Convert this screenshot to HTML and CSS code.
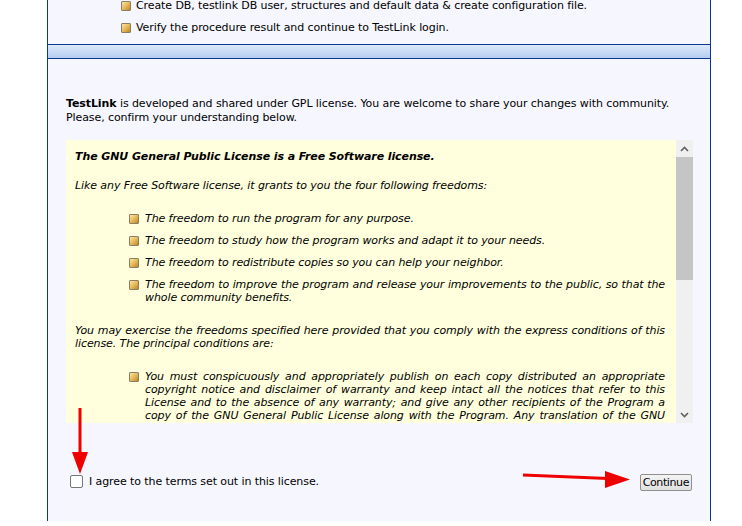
FILE: index.html
```html
<!DOCTYPE html>
<html>
<head>
<meta charset="utf-8">
<link rel="stylesheet" href="styles.css">
</head>
<body>
<div class="panel">
  <ul class="steps">
    <li><span class="bullet"></span>Create DB, testlink DB user, structures and default data &amp; create configuration file.</li>
    <li><span class="bullet"></span>Verify the procedure result and continue to TestLink login.</li>
  </ul>
  <div class="band"></div>
  <div class="content">
    <p class="intro"><b>TestLink</b> is developed and shared under GPL license. You are welcome to share your changes with community.<br>Please, confirm your understanding below.</p>
    <div class="license">
      <div class="license-text">
        <p class="title">The GNU General Public License is a Free Software license.</p>
        <p>Like any Free Software license, it grants to you the four following freedoms:</p>
        <ul class="items">
          <li><span class="bullet"></span><span>The freedom to run the program for any purpose.</span></li>
          <li><span class="bullet"></span><span>The freedom to study how the program works and adapt it to your needs.</span></li>
          <li><span class="bullet"></span><span>The freedom to redistribute copies so you can help your neighbor.</span></li>
          <li><span class="bullet"></span><span>The freedom to improve the program and release your improvements to the public, so that the whole community benefits.</span></li>
        </ul>
        <p>You may exercise the freedoms specified here provided that you comply with the express conditions of this license. The principal conditions are:</p>
        <ul class="items">
          <li><span class="bullet"></span><span>You must conspicuously and appropriately publish on each copy distributed an appropriate copyright notice and disclaimer of warranty and keep intact all the notices that refer to this License and to the absence of any warranty; and give any other recipients of the Program a copy of the GNU General Public License along with the Program. Any translation of the GNU General Public License must be accompanied by the GNU General Public License.</span></li>
        </ul>
      </div>
      <div class="scrollbar">
        <div class="arrow up"><svg width="9" height="6" viewBox="0 0 9 6"><path d="M1 5 L4.5 1.5 L8 5" fill="none" stroke="#606060" stroke-width="1.6"/></svg></div>
        <div class="track"><div class="thumb"></div></div>
        <div class="arrow down"><svg width="9" height="6" viewBox="0 0 9 6"><path d="M1 1 L4.5 4.5 L8 1" fill="none" stroke="#606060" stroke-width="1.6"/></svg></div>
      </div>
    </div>
    <div class="actions">
      <label class="agree"><span class="check"></span>I agree to the terms set out in this license.</label>
      <button class="continue">Continue</button>
    </div>
  </div>
</div>
<svg class="annot" width="742" height="526" viewBox="0 0 742 526">
  <line x1="80" y1="408" x2="80" y2="455" stroke="#ee0000" stroke-width="3"/>
  <polygon points="72,452 88,452 80,474" fill="#ee0000"/>
  <line x1="523" y1="475" x2="608" y2="478.5" stroke="#ee0000" stroke-width="3"/>
  <polygon points="605,471 630,479.5 605,488" fill="#ee0000"/>
</svg>
</body>
</html>
```
FILE: styles.css
```css
html, body {
  margin: 0;
  padding: 0;
  background: #ffffff;
}
body {
  font-family: "DejaVu Sans", Tahoma, sans-serif;
  font-size: 11px;
  letter-spacing: -0.09px;
  color: #000;
  position: relative;
  height: 526px;
  overflow: hidden;
}
.panel {
  margin-left: 47px;
  width: 662px;
  height: 526px;
  border-left: 1px solid #0a3792;
  border-right: 1px solid #0a3792;
  background: #f6f7fe;
}
.steps {
  list-style: none;
  margin: -5px 0 0 0;
  padding: 0 0 5px 73px;
}
.steps li {
  display: flex;
  align-items: center;
  height: 22px;
  line-height: 14px;
}
.bullet {
  display: inline-block;
  flex: none;
  width: 8px;
  height: 8px;
  border: 1px solid #8a7f63;
  background: linear-gradient(135deg, #fbe7a7 0%, #e4b552 55%, #b8862c 100%);
  margin-right: 5px;
  border-radius: 1px;
}
.band {
  height: 13px;
  border-top: 1px solid #0a3792;
  border-bottom: 1px solid #0a3792;
  background: linear-gradient(#dde8fb, #b6cdf0);
}
.content {
  padding: 0 0 0 18px;
}
.intro {
  margin: 0;
  padding-top: 38px;
  line-height: 14px;
}
.license {
  margin-top: 15px;
  width: 627px;
  height: 283px;
  display: flex;
  background: #ffffdd;
}
.license-text {
  flex: 1;
  overflow: hidden;
  padding: 10px 11px 0 9px;
  font-style: italic;
  line-height: 13px;
  text-align: justify;
}
.license-text p {
  margin: 0 0 17px 0;
}
.license-text .title {
  font-weight: bold;
  margin-bottom: 16px;
}
.items {
  list-style: none;
  margin: 20px 0 20px 0;
  padding: 0 0 0 54px;
}
.items li {
  display: flex;
  align-items: flex-start;
  margin-bottom: 9px;
}
.items .bullet {
  margin-top: 2px;
  margin-right: 6px;
}
.scrollbar {
  width: 17px;
  flex: none;
  background: #f0f0f0;
  display: flex;
  flex-direction: column;
}
.arrow {
  height: 17px;
  display: flex;
  align-items: center;
  justify-content: center;
}
.track {
  flex: 1;
}
.thumb {
  height: 123px;
  background: #c5c5c5;
}
.actions {
  width: 627px;
  display: flex;
  justify-content: space-between;
  align-items: center;
  margin-top: 48px;
}
.agree {
  display: flex;
  align-items: center;
  padding-left: 4px;
}
.check {
  width: 11px;
  height: 11px;
  border: 1px solid #767676;
  border-radius: 2px;
  background: #fff;
  margin-right: 6px;
}
.continue {
  font-family: "DejaVu Sans", Tahoma, sans-serif;
  font-size: 11px;
  letter-spacing: -0.4px;
  height: 17px;
  padding: 0 2px;
  margin-right: 1px;
  margin-top: 3px;
  border: 1px solid #8f8f8f;
  border-radius: 2px;
  background: linear-gradient(#f4f4f4, #e0e0e0);
  color: #000;
}
.annot {
  position: absolute;
  left: 0;
  top: 0;
  pointer-events: none;
}
```
